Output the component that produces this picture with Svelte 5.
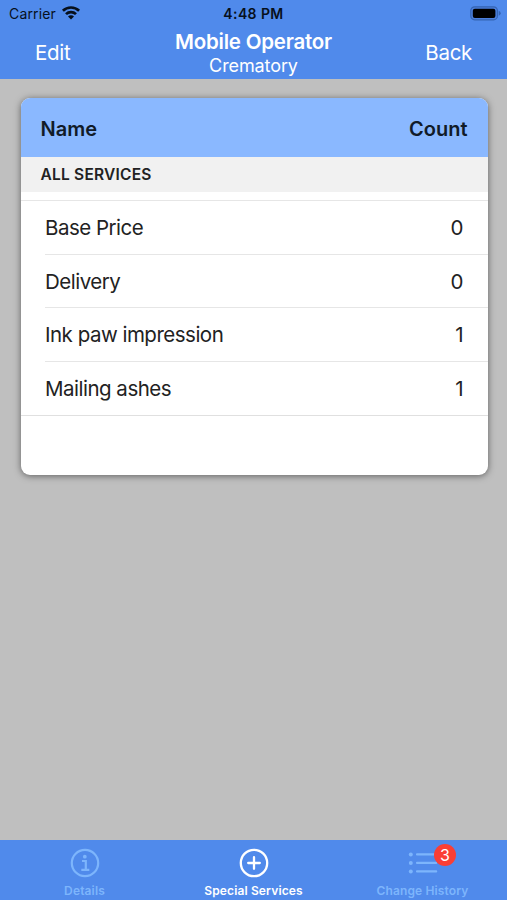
<script>
  const services = [
    { name: 'Base Price', count: 0 },
    { name: 'Delivery', count: 0 },
    { name: 'Ink paw impression', count: 1 },
    { name: 'Mailing ashes', count: 1 }
  ];
</script>

<div class="screen">
  <header>
    <div class="status">
      <div class="carrier">
        <span>Carrier</span>
        <svg width="20" height="15" viewBox="0 0 20 15" fill="none" stroke="#07101c" stroke-width="2.7">
          <path d="M1.9 5.8a11.6 11.6 0 0 1 16.2 0" />
          <path d="M5 9.1a7.1 7.1 0 0 1 10 0" />
          <path d="M10 14.4 7 11.4a4.2 4.2 0 0 1 6 0Z" fill="#07101c" stroke="none" />
        </svg>
      </div>
      <span class="time">4:48 PM</span>
      <div class="battery">
        <svg width="32" height="15" viewBox="0 0 32 15">
          <rect x="0.8" y="0.8" width="26.6" height="13" rx="3.8" fill="#4c7fdc" stroke="#3564b2" stroke-width="1.2" />
          <rect x="2.8" y="2.7" width="22.6" height="9.3" rx="2" fill="#000" />
          <path d="M28.7 4.8q2 .8 2 2.5t-2 2.5Z" fill="#3564b2" />
        </svg>
      </div>
    </div>
    <nav class="bar">
      <span class="edit">Edit</span>
      <div class="titles">
        <strong>Mobile Operator</strong>
        <span>Crematory</span>
      </div>
      <span class="back">Back</span>
    </nav>
  </header>

  <main>
    <section class="card">
      <div class="head"><span>Name</span><span>Count</span></div>
      <div class="group">ALL SERVICES</div>
      <ul>
        {#each services as s}
          <li><span class="name">{s.name}</span><span>{s.count}</span></li>
        {/each}
      </ul>
    </section>
  </main>

  <footer>
    <div class="tab">
      <svg width="30" height="30" viewBox="0 0 30 30" fill="none" stroke="currentColor" stroke-width="2.2">
        <circle cx="15" cy="15" r="13.2" />
        <circle cx="14.8" cy="8.7" r="1.9" fill="currentColor" stroke="none" />
        <path d="M12 13h3.8v8.5M11.3 21.8h8" stroke-width="2.2" />
      </svg>
      <span>Details</span>
    </div>
    <div class="tab active">
      <svg width="30" height="30" viewBox="0 0 30 30" fill="none" stroke="currentColor" stroke-width="2.3">
        <circle cx="15" cy="15" r="13.2" />
        <path d="M15 9.2v11.6M9.2 15h11.6" stroke-linecap="round" />
      </svg>
      <span>Special Services</span>
    </div>
    <div class="tab">
      <svg width="30" height="30" viewBox="0 0 30 30" fill="none" stroke="currentColor" stroke-width="2.1" stroke-linecap="round">
        <path d="M9 6.4h19.2M9 14.9h19.2M9 23.4h19.2" />
        <g fill="currentColor" stroke="none">
          <circle cx="2.8" cy="6.4" r="2" />
          <circle cx="2.8" cy="14.9" r="2" />
          <circle cx="2.8" cy="23.4" r="2" />
        </g>
      </svg>
      <span>Change History</span>
      <b class="badge">3</b>
    </div>
  </footer>
</div>

<style>
  .screen {
    display: flex;
    flex-direction: column;
    width: 507px;
    height: 900px;
    overflow: hidden;
    background: #bfbfbf;
    font-family: Inter, 'Liberation Sans', sans-serif;
    color: #222;
    white-space: nowrap;
  }
  header {
    height: 79px;
    flex: none;
    background: #508aeb;
  }
  .status {
    display: grid;
    grid-template-columns: 1fr auto 1fr;
    height: 27px;
    align-items: center;
    color: #07101c;
    font-size: 14px;
    line-height: 27px;
  }
  .carrier {
    display: flex;
    align-items: center;
    gap: 5px;
    padding-left: 9px;
    letter-spacing: 0.15px;
  }
  .carrier svg { margin-bottom: 2px; }
  .time { font-weight: 600; letter-spacing: 0.4px; }
  .battery {
    display: flex;
    justify-content: flex-end;
    padding-right: 5px;
  }
  .bar {
    display: grid;
    grid-template-columns: 1fr auto 1fr;
    height: 52px;
    color: #fff;
    font-size: 20.5px;
    line-height: 52px;
    letter-spacing: -0.3px;
  }
  .edit { padding-left: 35px; }
  .back { padding-right: 35px; text-align: right; }
  .titles {
    display: flex;
    flex-direction: column;
    align-items: center;
    padding-top: 3px;
  }
  .titles strong {
    font-size: 20.5px;
    font-weight: 600;
    line-height: 24px;
    letter-spacing: -0.23px;
  }
  .titles span { font-size: 18px; line-height: 23px; letter-spacing: -0.1px; }
  main {
    flex: 1;
    padding: 19px 19.5px 0 20.5px;
  }
  .card {
    height: 377px;
    border-radius: 9px;
    overflow: hidden;
    background: #fff;
    box-shadow: 0 1px 7px rgba(0, 0, 0, 0.5);
  }
  .head {
    display: flex;
    justify-content: space-between;
    height: 59px;
    padding: 0 20px;
    background: #8ab8ff;
    font-size: 20px;
    font-weight: 600;
    line-height: 62px;
    color: #111b28;
  }
  .group {
    height: 35px;
    padding-left: 20px;
    background: #f1f1f1;
    font-size: 15.5px;
    font-weight: 600;
    line-height: 36px;
    letter-spacing: 0.22px;
  }
  ul {
    margin: 8px 0 0;
    padding: 0;
    list-style: none;
    border-top: 1px solid #e6e6e6;
    border-bottom: 1px solid #e0e0e0;
  }
  li {
    box-sizing: border-box;
    display: flex;
    justify-content: space-between;
    height: 53.75px;
    margin-left: 24.5px;
    padding-right: 24px;
    font-size: 20.5px;
    line-height: 54px;
  }
  .name { letter-spacing: -0.5px; }
  li:first-child { height: 52.5px; }
  li + li { border-top: 1px solid #e6e6e6; }
  footer {
    display: grid;
    grid-template-columns: repeat(3, 1fr);
    height: 60px;
    flex: none;
    background: #508aeb;
  }
  .tab {
    position: relative;
    display: flex;
    flex-direction: column;
    align-items: center;
    padding-top: 8px;
    color: #7db5fc;
    font-size: 12px;
    font-weight: 600;
    line-height: 16px;
    letter-spacing: 0.14px;
  }
  .tab span { margin-top: 5px; }
  .active { color: #fff; }
  .badge {
    position: absolute;
    top: 4px;
    left: 96px;
    width: 22px;
    height: 22px;
    border-radius: 50%;
    background: #fa3e35;
    color: #fff;
    font-size: 16px;
    font-weight: 400;
    line-height: 22px;
    text-align: center;
  }
</style>
